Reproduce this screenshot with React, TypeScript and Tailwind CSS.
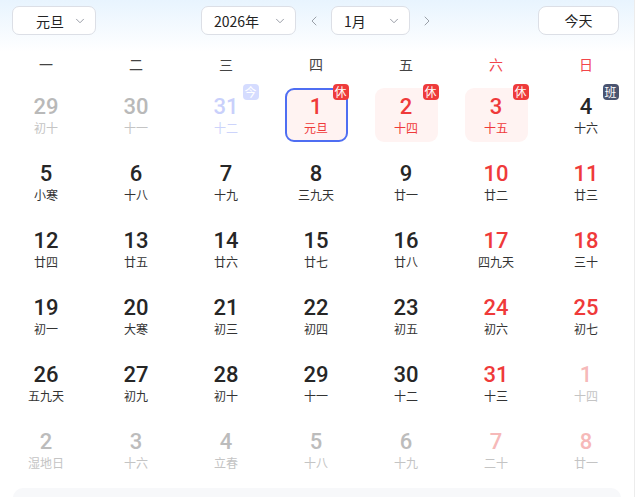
import React from "react";
import { ChevronDown, ChevronLeft, ChevronRight } from "lucide-react";

type Kind = "prev" | "today" | "normal" | "weekend" | "holiday" | "next" | "nextWeekend";
type Day = { n: number; l: string; k: Kind; badge?: "休" | "班" | "今"; selected?: boolean };

const rows: Day[][] = [
  [
    { n: 29, l: "初十", k: "prev" },
    { n: 30, l: "十一", k: "prev" },
    { n: 31, l: "十二", k: "today", badge: "今" },
    { n: 1, l: "元旦", k: "holiday", badge: "休", selected: true },
    { n: 2, l: "十四", k: "holiday", badge: "休" },
    { n: 3, l: "十五", k: "holiday", badge: "休" },
    { n: 4, l: "十六", k: "normal", badge: "班" },
  ],
  [
    { n: 5, l: "小寒", k: "normal" },
    { n: 6, l: "十八", k: "normal" },
    { n: 7, l: "十九", k: "normal" },
    { n: 8, l: "三九天", k: "normal" },
    { n: 9, l: "廿一", k: "normal" },
    { n: 10, l: "廿二", k: "weekend" },
    { n: 11, l: "廿三", k: "weekend" },
  ],
  [
    { n: 12, l: "廿四", k: "normal" },
    { n: 13, l: "廿五", k: "normal" },
    { n: 14, l: "廿六", k: "normal" },
    { n: 15, l: "廿七", k: "normal" },
    { n: 16, l: "廿八", k: "normal" },
    { n: 17, l: "四九天", k: "weekend" },
    { n: 18, l: "三十", k: "weekend" },
  ],
  [
    { n: 19, l: "初一", k: "normal" },
    { n: 20, l: "大寒", k: "normal" },
    { n: 21, l: "初三", k: "normal" },
    { n: 22, l: "初四", k: "normal" },
    { n: 23, l: "初五", k: "normal" },
    { n: 24, l: "初六", k: "weekend" },
    { n: 25, l: "初七", k: "weekend" },
  ],
  [
    { n: 26, l: "五九天", k: "normal" },
    { n: 27, l: "初九", k: "normal" },
    { n: 28, l: "初十", k: "normal" },
    { n: 29, l: "十一", k: "normal" },
    { n: 30, l: "十二", k: "normal" },
    { n: 31, l: "十三", k: "weekend" },
    { n: 1, l: "十四", k: "nextWeekend" },
  ],
  [
    { n: 2, l: "湿地日", k: "next" },
    { n: 3, l: "十六", k: "next" },
    { n: 4, l: "立春", k: "next" },
    { n: 5, l: "十八", k: "next" },
    { n: 6, l: "十九", k: "next" },
    { n: 7, l: "二十", k: "nextWeekend" },
    { n: 8, l: "廿一", k: "nextWeekend" },
  ],
];

const numColor: Record<Kind, string> = {
  prev: "text-[#b9b9b9]",
  today: "text-[#c9d0fb]",
  normal: "text-[#262626]",
  weekend: "text-[#ef3a3a]",
  holiday: "text-[#ef3a3a]",
  next: "text-[#bcbcbc]",
  nextWeekend: "text-[#f6b9b9]",
};
const lunarColor: Record<Kind, string> = {
  prev: "text-[#c4c4c4]",
  today: "text-[#cdd4fb]",
  normal: "text-[#333333]",
  weekend: "text-[#333333]",
  holiday: "text-[#ef3a3a]",
  next: "text-[#c4c4c4]",
  nextWeekend: "text-[#c4c4c4]",
};
const badgeBg: Record<string, string> = {
  "休": "bg-[#ee3b3b]",
  "班": "bg-[#4a5470]",
  "今": "bg-[#d5dcff]",
};

const cjk = { fontFamily: '"Noto Sans CJK SC", "Noto Sans", sans-serif' };
const num = { fontFamily: 'Roboto, "Noto Sans", sans-serif' };

function Select({ label, w, textPl }: { label: string; w: string; textPl: string }) {
  return (
    <div className={`h-[29px] ${w} bg-white border border-[#dcdfe6] rounded-[7px] flex items-center justify-between pr-[8px] ${textPl}`}>
      <span className="text-[14px] text-[#222] leading-none" style={cjk}>{label}</span>
      <ChevronDown size={14} strokeWidth={1.5} className="text-[#8a8f99]" />
    </div>
  );
}

export default function App() {
  const weekdays = ["一", "二", "三", "四", "五", "六", "日"];
  return (
    <div className="w-[636px] h-[497px] overflow-hidden bg-white relative">
      <div className="w-[635px] h-full border-r border-[#ececec] bg-[linear-gradient(180deg,#e8f4fe_0px,#ffffff_52px)]">
        <div className="h-[47px] pt-[6px] pl-[12px] flex items-start">
          <Select label="元旦" w="w-[84px]" textPl="pl-[23px]" />
          <div className="ml-[105px]">
            <Select label="2026年" w="w-[95px]" textPl="pl-[12px]" />
          </div>
          <div className="w-[35px] h-[29px] flex items-center justify-center">
            <ChevronLeft size={16} strokeWidth={1.5} className="text-[#9aa0a8]" />
          </div>
          <Select label="1月" w="w-[79px]" textPl="pl-[12px]" />
          <div className="w-[33px] h-[29px] flex items-center justify-center">
            <ChevronRight size={16} strokeWidth={1.5} className="text-[#9aa0a8]" />
          </div>
          <div className="ml-[95px] h-[29px] w-[81px] bg-white border border-[#dcdfe6] rounded-[8px] flex items-center justify-center">
            <span className="text-[14px] text-[#222]" style={cjk}>今天</span>
          </div>
        </div>
        <div className="grid grid-cols-7 w-[630px] ml-[1px] h-[34px] items-center">
          {weekdays.map((d, i) => (
            <div key={d} className={`text-center text-[14px] ${i >= 5 ? "text-[#f2464b]" : "text-[#444]"}`} style={cjk}>
              {d}
            </div>
          ))}
        </div>
        <div className="grid grid-cols-7 w-[630px] ml-[1px]">
          {rows.flat().map((d, i) => {
            const pink = d.k === "holiday";
            return (
              <div key={i} className="h-[67px] flex items-center justify-center">
                <div
                  className={`relative w-[63px] h-[54px] rounded-[9px] flex flex-col items-center justify-center ${pink ? "bg-[#fff3f2]" : ""} ${d.selected ? "border-2 border-[#4f6ef2]" : ""}`}
                >
                  <div className={`text-[22px] leading-[27px] font-medium ${numColor[d.k]}`} style={num}>
                    {d.n}
                  </div>
                  <div className={`text-[12px] leading-[16px] ${lunarColor[d.k]}`} style={cjk}>
                    {d.l}
                  </div>
                  {d.badge && (
                    <div
                      className={`absolute ${d.selected ? "top-[-6px] right-[-3px]" : "top-[-4px] right-[-1px]"} w-[16px] h-[16px] rounded-[4px] ${badgeBg[d.badge]} flex items-center justify-center text-white text-[12px] leading-none`}
                      style={cjk}
                    >
                      {d.badge}
                    </div>
                  )}
                </div>
              </div>
            );
          })}
        </div>
        <div className="mt-[5px] mx-[13px] h-[40px] rounded-[10px] bg-[#f7f8fa]" />
      </div>
    </div>
  );
}
